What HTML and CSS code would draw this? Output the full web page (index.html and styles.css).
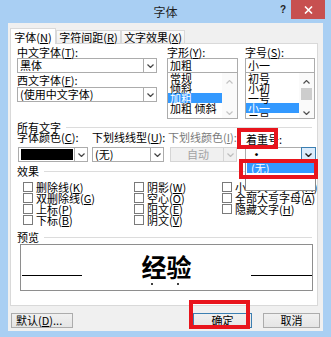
FILE: index.html
```html
<!DOCTYPE html>
<html lang="zh-CN">
<head>
<meta charset="utf-8">
<title>字体</title>
<link rel="stylesheet" href="styles.css">
</head>
<body>
<div class="window">
  <div class="titlebar">
    <div></div>
    <div class="title">字体</div>
    <div class="controls">
      <span class="help">?</span>
      <span class="close"><svg width="9" height="8" viewBox="0 0 9 8"><path d="M1 0.5 L8 7.5 M8 0.5 L1 7.5" stroke="#fff" stroke-width="1.6" fill="none"/></svg></span>
    </div>
  </div>
  <div class="client">
    <div class="tabs">
      <div class="tab sel t1">字体(<u>N</u>)</div>
      <div class="tab t2">字符间距(<u>R</u>)</div>
      <div class="tab t3">文字效果(<u>X</u>)</div>
    </div>
    <div class="page">
      <div class="fontgrid">
        <div class="col col1">
          <div class="lbl">中文字体(<u>T</u>):</div>
          <div class="combo"><span class="val">黑体</span><span class="arrow"><svg width="7" height="4" viewBox="0 0 7 4"><path d="M0.5 0.5 L3.5 3.5 L6.5 0.5" fill="none" stroke="#444" stroke-width="1.2"/></svg></span></div>
          <div class="lbl l2">西文字体(<u>F</u>):</div>
          <div class="combo cb2"><span class="val">(使用中文字体)</span><span class="arrow"><svg width="7" height="4" viewBox="0 0 7 4"><path d="M0.5 0.5 L3.5 3.5 L6.5 0.5" fill="none" stroke="#444" stroke-width="1.2"/></svg></span></div>
        </div>
        <div class="col col2">
          <div class="lbl">字形(<u>Y</u>):</div>
          <div class="input">加粗</div>
          <div class="list">
            <div class="items">
              <div class="item">常规</div>
              <div class="item">倾斜</div>
              <div class="item on">加粗</div>
              <div class="item">加粗 倾斜</div>
            </div>
            <div class="sb dis">
              <div class="sbbtn up"><svg width="7" height="4" viewBox="0 0 7 4"><path d="M0.5 3.5 L3.5 0.5 L6.5 3.5" fill="none" stroke="#c4c4c4" stroke-width="1.2"/></svg></div>
              <div class="sbtrack"></div>
              <div class="sbbtn down"><svg width="7" height="4" viewBox="0 0 7 4"><path d="M0.5 0.5 L3.5 3.5 L6.5 0.5" fill="none" stroke="#c4c4c4" stroke-width="1.2"/></svg></div>
            </div>
          </div>
        </div>
        <div class="col col3">
          <div class="lbl">字号(<u>S</u>):</div>
          <div class="input">小一</div>
          <div class="list">
            <div class="items">
              <div class="item">初号</div>
              <div class="item">小初</div>
              <div class="item">一号</div>
              <div class="item on">小一</div>
              <div class="item">二号</div>
            </div>
            <div class="sb">
              <div class="sbbtn up"><svg width="7" height="4" viewBox="0 0 7 4"><path d="M0.5 3.5 L3.5 0.5 L6.5 3.5" fill="none" stroke="#505050" stroke-width="1.2"/></svg></div>
              <div class="sbtrack"><div class="thumb"></div></div>
              <div class="sbbtn down"><svg width="7" height="4" viewBox="0 0 7 4"><path d="M0.5 0.5 L3.5 3.5 L6.5 0.5" fill="none" stroke="#505050" stroke-width="1.2"/></svg></div>
            </div>
          </div>
        </div>
      </div>

      <div class="grp g1"><span>所有文字</span><i></i></div>
      <div class="quad subrow">
        <div>字体颜色(<u>C</u>):</div>
        <div>下划线线型(<u>U</u>):</div>
        <div class="disabled">下划线颜色(<u>I</u>):</div>
        <div class="emph">着重号:</div>
      </div>
      <div class="quad comborow">
        <div class="combo cc1"><span class="swatch"></span><span class="arrow"><svg width="7" height="4" viewBox="0 0 7 4"><path d="M0.5 0.5 L3.5 3.5 L6.5 0.5" fill="none" stroke="#444" stroke-width="1.2"/></svg></span></div>
        <div class="combo cc2"><span class="val">(无)</span><span class="arrow"><svg width="7" height="4" viewBox="0 0 7 4"><path d="M0.5 0.5 L3.5 3.5 L6.5 0.5" fill="none" stroke="#444" stroke-width="1.2"/></svg></span></div>
        <div class="combo cc3"><span class="val">自动</span><span class="arrow"><svg width="7" height="4" viewBox="0 0 7 4"><path d="M0.5 0.5 L3.5 3.5 L6.5 0.5" fill="none" stroke="#bdbdbd" stroke-width="1.2"/></svg></span></div>
        <div class="combo cc4"><span class="val">·</span><span class="arrow pressed"><svg width="7" height="4" viewBox="0 0 7 4"><path d="M0.5 0.5 L3.5 3.5 L6.5 0.5" fill="none" stroke="#222" stroke-width="1.4"/></svg></span></div>
      </div>

      <div class="grp g2"><span>效果</span><i></i></div>
      <div class="checks">
        <div class="cb"><span class="box"></span>删除线(<u>K</u>)</div>
        <div class="cb"><span class="box"></span>阴影(<u>W</u>)</div>
        <div class="cb"><span class="box"></span>小型大写字母(<u>M</u>)</div>
        <div class="cb"><span class="box"></span>双删除线(<u>G</u>)</div>
        <div class="cb"><span class="box"></span>空心(<u>O</u>)</div>
        <div class="cb"><span class="box"></span>全部大写字母(<u>A</u>)</div>
        <div class="cb"><span class="box"></span>上标(<u>P</u>)</div>
        <div class="cb"><span class="box"></span>阳文(<u>E</u>)</div>
        <div class="cb"><span class="box"></span>隐藏文字(<u>H</u>)</div>
        <div class="cb"><span class="box"></span>下标(<u>B</u>)</div>
        <div class="cb"><span class="box"></span>阴文(<u>V</u>)</div>
      </div>

      <div class="grp g3"><span>预览</span><i></i></div>
      <div class="preview">
        <span class="pline"></span>
        <div class="pword">
          <div class="pch"><span class="ch">经</span><span class="dot"></span></div>
          <div class="pch"><span class="ch">验</span><span class="dot"></span></div>
        </div>
        <span class="pline r"></span>
      </div>

      <div class="droplist"><div class="ditem">(无)</div></div>
    </div>
    <div class="buttons">
      <div class="btn b-def">默认(<u>D</u>)...</div>
      <div class="btn b-ok">确定</div>
      <div class="btn b-cancel">取消</div>
    </div>
  </div>
  <div class="redbox rb1"></div>
  <div class="redbox rb2"></div>
  <div class="redbox rb3"></div>
</div>
</body>
</html>
```

FILE: styles.css
```css
* { box-sizing: border-box; }
html, body { margin: 0; padding: 0; }
body {
  width: 331px;
  height: 337px;
  overflow: hidden;
  background: #a9cff3;
  font-family: "Noto Sans CJK SC", "Microsoft YaHei", sans-serif;
  font-size: 11px;
  color: #000;
}
u { text-decoration: underline; text-underline-offset: 1px; }

.window {
  position: relative;
  width: 331px;
  height: 337px;
  background: #a9cff3;
  display: flex;
  flex-direction: column;
}

.titlebar {
  height: 23px;
  display: grid;
  grid-template-columns: 1fr auto 1fr;
  align-items: start;
}
.title { font-size: 12px; line-height: 23px; color: #1e1e1e; }
.controls { display: flex; justify-content: flex-end; align-items: flex-start; }
.help {
  font-family: "Liberation Sans", sans-serif;
  font-weight: bold;
  font-size: 10px;
  line-height: 19px;
  color: #222;
  margin-right: 5px;
}
.close {
  width: 34px;
  height: 19px;
  background: #c75050;
  display: flex;
  align-items: center;
  justify-content: center;
  margin-right: 6px;
}

.client {
  margin: 0 8px;
  height: 308px;
  background: #f0f0f0;
  padding: 5px 5px 0 2px;
}

.tabs {
  display: flex;
  height: 16px;
  margin-bottom: -1px;
  position: relative;
  z-index: 1;
}
.tab {
  height: 13px;
  margin-top: 2px;
  border: 1px solid #d9d9d9;
  border-bottom: none;
  background: linear-gradient(#fbfbfb, #efefef);
  line-height: 12px;
  text-align: center;
  white-space: nowrap;
}
.tab.sel {
  height: 16px;
  margin-top: 0;
  background: #fff;
  padding-top: 2px;
}
.t1 { width: 46px; }
.t2 { width: 65px; }
.t3 { width: 64px; }

.page {
  position: relative;
  height: 263px;
  border: 1px solid #d9d9d9;
  background: #fff;
  padding: 3px 0 0 6px;
}

.fontgrid { display: flex; }
.col1 { width: 140px; margin-right: 10px; }
.col2 { width: 71px; margin-right: 7px; }
.col3 { width: 70px; }

.lbl { height: 11px; line-height: 11px; white-space: nowrap; }
.l2 { margin-top: 2px; }
.cb2 { margin-top: 1px; }

.combo {
  height: 15px;
  border: 1px solid #acacac;
  background: #fff;
  display: flex;
}
.combo .val {
  flex: 1;
  line-height: 13px;
  padding-left: 2px;
  white-space: nowrap;
  overflow: hidden;
}
.arrow {
  width: 13px;
  border-left: 1px solid #acacac;
  display: flex;
  align-items: center;
  justify-content: center;
}

.input {
  height: 15px;
  border: 1px solid #acacac;
  background: #fff;
  line-height: 13px;
  padding-left: 2px;
}
.list {
  height: 47px;
  margin-top: -1px;
  border: 1px solid #acacac;
  background: #fff;
  display: flex;
}
.items { flex: 1; overflow: hidden; }
.item { height: 10px; line-height: 10px; padding-left: 2px; white-space: nowrap; }
.item.on { background: #3399ff; color: #fff; }
.sb { width: 15px; display: flex; flex-direction: column; background: #fafafa; }
.sbbtn { height: 15px; display: flex; justify-content: center; }
.sbbtn.up { padding-top: 7px; }
.sbbtn.down { padding-top: 8px; }
.sbtrack { flex: 1; padding: 0 2px; }
.thumb { height: 12px; background: #cdcdcd; }

.grp {
  display: flex;
  align-items: center;
  height: 10px;
  line-height: 10px;
  margin-right: 5px;
}
.grp i { flex: 1; height: 1px; background: #dcdcdc; margin-left: 5px; }
.g1 { margin-top: 3px; }
.g2 { margin-top: 4px; }
.g3 { margin-top: 6px; }

.quad { display: grid; grid-template-columns: 75px 76px 77px 71px; }
.subrow { height: 11px; line-height: 11px; white-space: nowrap; }
.subrow .disabled { color: #7a7a7a; }
.subrow .emph { padding-left: 1px; line-height: 14px; }
.comborow { margin-top: 4px; }
.cc1 { margin-left: 1px; width: 70px; }
.cc2 { width: 72px; }
.cc3 { margin-left: 2px; width: 67px; background: #f0f0f0; border-color: #d5d5d5; }
.cc3 .val { text-align: center; color: #a3a3a3; }
.cc3 .arrow { border-left-color: #d5d5d5; }
.cc4 { width: 71px; }
.cc4 .val { padding-left: 5px; font-weight: bold; }
.swatch { flex: 1; background: #000; margin: 1px 1px 1px 2px; }
.arrow.pressed {
  width: 15px;
  margin: -1px -1px -1px 0;
  border: 1px solid #3c7fb1;
  background: #dcecfc;
}

.checks {
  margin-top: 6px;
  padding-left: 6px;
  display: grid;
  grid-template-columns: 111px 88px 1fr;
}
.cb {
  height: 11px;
  line-height: 10px;
  display: flex;
  align-items: flex-start;
  white-space: nowrap;
}
.box {
  width: 10px;
  height: 10px;
  border: 1px solid #7a7a7a;
  background: #fff;
  margin-right: 3px;
  flex: none;
}

.preview {
  margin-top: 2px;
  margin-left: 3px;
  width: 293px;
  height: 47px;
  border: 1px solid #8e8e8e;
  background: #fff;
  padding-left: 1px;
  display: flex;
  justify-content: space-between;
  align-items: flex-start;
}
.pline { width: 60px; height: 1px; background: #000; margin-top: 30px; }
.pline.r { width: 61px; }
.pword { display: flex; margin-top: 9px; }
.pch { display: flex; flex-direction: column; align-items: center; }
.ch { font-size: 25px; line-height: 25px; font-weight: bold; }
.dot { width: 2px; height: 2px; border-radius: 50%; background: #000; margin-top: 4px; margin-right: 3px; }

.droplist {
  position: absolute;
  left: 234px;
  top: 116px;
  width: 71px;
  height: 31px;
  border: 1px solid #8a8a8a;
  background: #fff;
  padding: 2px 1px;
  z-index: 2;
}
.ditem {
  height: 10px;
  line-height: 10px;
  background: #3399ff;
  color: #fff;
  padding-left: 4px;
}

.buttons {
  display: flex;
  margin-top: 7px;
  margin-left: 1px;
  margin-right: -2px;
}
.btn {
  height: 15px;
  border: 1px solid #acacac;
  background: linear-gradient(#f0f0f0, #e5e5e5);
  line-height: 13px;
  text-align: center;
  white-space: nowrap;
}
.b-def { width: 62px; text-align: left; padding-left: 4px; }
.b-ok { width: 59px; margin-left: auto; border-color: #3c7fb1; }
.b-cancel { width: 57px; margin-left: 11px; }

.redbox {
  position: absolute;
  border: 4px solid #e8141c;
  z-index: 5;
}
.rb1 { left: 237px; top: 128px; width: 41px; height: 21px; }
.rb2 { left: 239px; top: 159px; width: 79px; height: 20px; }
.rb3 { left: 189px; top: 300px; width: 61px; height: 29px; }
```
